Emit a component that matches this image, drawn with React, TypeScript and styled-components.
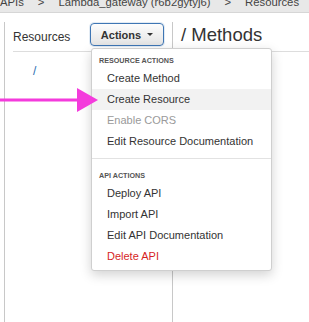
import styled, { createGlobalStyle } from "styled-components";

type MenuItem = {
  label: string;
  tone?: "normal" | "muted" | "danger";
  active?: boolean;
};

type MenuGroup = {
  title: string;
  items: MenuItem[];
};

const groups: MenuGroup[] = [
  {
    title: "Resource Actions",
    items: [
      { label: "Create Method" },
      { label: "Create Resource", active: true },
      { label: "Enable CORS", tone: "muted" },
      { label: "Edit Resource Documentation" },
    ],
  },
  {
    title: "API Actions",
    items: [
      { label: "Deploy API" },
      { label: "Import API" },
      { label: "Edit API Documentation" },
      { label: "Delete API", tone: "danger" },
    ],
  },
];

const toneColor = {
  normal: "#333333",
  muted: "#9a9a9a",
  danger: "#d61f1f",
};

const App = () => {
  return (
    <>
      <GlobalStyle />
      <Page>
        <Breadcrumb>
          <Crumbs>
            <span>APIs</span>
            <Sep>&gt;</Sep>
            <span>Lambda_gateway (r6b2gytyj6)</span>
            <Sep>&gt;</Sep>
            <span>Resources</span>
          </Crumbs>
        </Breadcrumb>
        <Workspace>
          <ResourcesPane>
            <PaneHeader>
              <PaneTitle>Resources</PaneTitle>
              <ActionsWrap>
                <ActionsButton>
                  Actions <Caret />
                </ActionsButton>
                <Dropdown>
                  {groups.map((group, gi) => (
                    <Group key={group.title} first={gi === 0}>
                      <GroupTitle>{group.title}</GroupTitle>
                      {group.items.map((item) => (
                        <Item
                          key={item.label}
                          active={!!item.active}
                          tone={item.tone || "normal"}
                        >
                          {item.label}
                        </Item>
                      ))}
                    </Group>
                  ))}
                </Dropdown>
              </ActionsWrap>
            </PaneHeader>
            <Tree>
              <TreeNode>/</TreeNode>
            </Tree>
          </ResourcesPane>
          <MethodsPane>
            <MethodsHeader>/ Methods</MethodsHeader>
          </MethodsPane>
        </Workspace>
        <Pointer width="100" height="30" viewBox="0 0 100 30">
          <rect x="0" y="13.5" width="80" height="3" fill="#f43bdc" />
          <polygon points="77,3 98,15 77,27" fill="#f43bdc" />
        </Pointer>
      </Page>
    </>
  );
};

const GlobalStyle = createGlobalStyle`
  html, body {
    margin: 0;
    padding: 0;
    background: #ffffff;
  }
  body {
    font-family: "Liberation Sans", Arial, sans-serif;
    color: #333333;
  }
`;

const Page = styled.div`
  position: relative;
  width: 309px;
  height: 322px;
  overflow: hidden;
  background: #ffffff;
`;

const Breadcrumb = styled.div`
  height: 13px;
  overflow: hidden;
  background: #e8e8e8;
  border-bottom: 1px solid #d6d6d6;
  box-sizing: border-box;
`;

const Crumbs = styled.div`
  display: flex;
  margin-top: -3px;
  font-size: 11.3px;
  line-height: 11px;
  color: #444444;
  white-space: nowrap;
`;

const Sep = styled.span`
  padding: 0 14px;
`;

const Workspace = styled.div`
  display: grid;
  grid-template-columns: 169px 1fr;
  margin: 9px 0 0 4px;
  height: 300px;
`;

const ResourcesPane = styled.div`
  border-left: 1px solid #c8c8c8;
  border-right: 1px solid #c8c8c8;
  display: flex;
  flex-direction: column;
`;

const PaneHeader = styled.div`
  display: flex;
  align-items: flex-start;
  justify-content: space-between;
  height: 30px;
  margin-left: 8px;
  padding: 1px 8px 0 0;
  border-bottom: 1px solid #dddddd;
  box-sizing: border-box;
`;

const PaneTitle = styled.div`
  font-size: 12px;
  line-height: 14px;
  color: #333333;
  padding-top: 7px;
`;

const ActionsWrap = styled.div`
  position: relative;
  z-index: 2;
`;

const ActionsButton = styled.button`
  display: flex;
  align-items: center;
  justify-content: center;
  gap: 4px;
  width: 74px;
  height: 23px;
  padding: 0;
  border: 1px solid #3f76b4;
  border-radius: 4px;
  background: linear-gradient(#fdfdfd, #e4e4e4);
  font-family: "Liberation Sans", Arial, sans-serif;
  font-size: 11px;
  font-weight: bold;
  color: #333333;
  box-shadow: 0 0 0 1px rgba(63, 118, 180, 0.15);
`;

const Caret = styled.span`
  display: inline-block;
  width: 0;
  height: 0;
  margin-left: 2px;
  border-left: 3px solid transparent;
  border-right: 3px solid transparent;
  border-top: 3px solid #333333;
`;

const Dropdown = styled.div`
  position: absolute;
  top: calc(100% + 2px);
  left: 1px;
  width: 181px;
  padding: 5px 0 3px;
  background: #ffffff;
  border: 1px solid #cfcfcf;
  border-radius: 3px;
  box-shadow: 0 4px 12px rgba(0, 0, 0, 0.18);
  box-sizing: border-box;
`;

const Group = styled.div<{ first: boolean }>`
  ${({ first }) =>
    first
      ? ""
      : `
    margin-top: 6px;
    padding-top: 10px;
    border-top: 1px solid #e2e2e2;
  `}
`;

const GroupTitle = styled.div`
  height: 14px;
  line-height: 14px;
  padding-left: 7px;
  font-size: 7.2px;
  font-weight: bold;
  text-transform: uppercase;
  color: #555555;
`;

const Item = styled.div<{ active: boolean; tone: "normal" | "muted" | "danger" }>`
  height: 21px;
  line-height: 21px;
  padding-left: 15px;
  font-size: 11px;
  color: ${({ tone }) => toneColor[tone]};
  background: ${({ active }) => (active ? "#f2f2f2" : "transparent")};
  white-space: nowrap;
`;

const Tree = styled.div`
  padding: 12px 0 0 28px;
`;

const TreeNode = styled.div`
  font-size: 12px;
  line-height: 14px;
  color: #2a6db0;
`;

const MethodsPane = styled.div`
  display: flex;
  flex-direction: column;
`;

const MethodsHeader = styled.div`
  height: 30px;
  line-height: 25px;
  padding-left: 8px;
  font-size: 18.5px;
  color: #333333;
  border-bottom: 1px solid #dddddd;
  box-sizing: border-box;
`;

const Pointer = styled.svg`
  position: absolute;
  left: 0;
  top: 85px;
  z-index: 3;
`;

export default App;
